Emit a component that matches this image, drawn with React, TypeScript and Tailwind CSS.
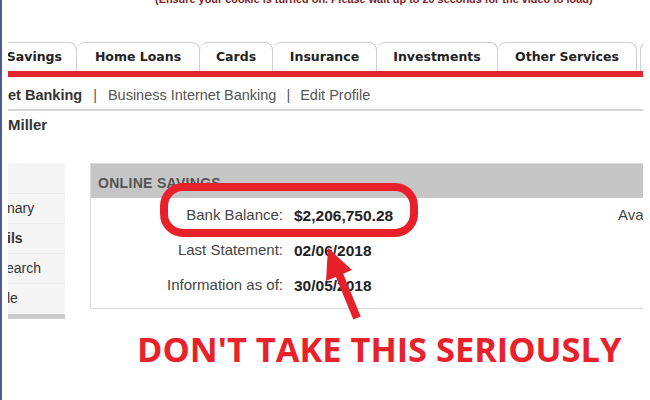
import React from "react";

const tabs = [
  { label: "Home Loans", w: "w-[123px]" },
  { label: "Cards", w: "w-[73px]" },
  { label: "Insurance", w: "w-[104px]" },
  { label: "Investments", w: "w-[121px]" },
  { label: "Other Services", w: "w-[139px]" },
];

const rows = [
  { label: "Bank Balance:", value: "$2,206,750.28", extra: "Available Balance:" },
  { label: "Last Statement:", value: "02/06/2018", extra: "" },
  { label: "Information as of:", value: "30/05/2018", extra: "" },
];

export default function App() {
  return (
    <div className="relative w-[650px] h-[400px] flex bg-white overflow-hidden">
      <div className="w-[2px] h-full bg-[#4d5b8c] shrink-0" />
      <div className="ml-[6px] w-[635px] h-full overflow-hidden flex flex-col shrink-0">
        {/* clipped top notice */}
        <div className="h-[6px] overflow-hidden">
          <div className="mt-[-7px] pl-[147px] whitespace-nowrap text-[10.9px] leading-[12px] font-bold text-[#7a1c1c] font-['Liberation_Sans',sans-serif]">
            (Ensure your cookie is turned on. Please wait up to 20 seconds for the video to load)
          </div>
        </div>

        {/* tabs */}
        <div className="mt-[36px] h-[29px] flex items-end font-['DejaVu_Sans',sans-serif] text-[12.5px] font-bold text-[#222]">
          <div className="w-[69px] h-[29px] shrink-0 flex items-center justify-end pr-[14px] border-t border-r border-[#cfcfcf] rounded-tr-[8px] whitespace-nowrap">
            Savings
          </div>
          {tabs.map((t) => (
            <div
              key={t.label}
              className={`${t.w} h-[29px] shrink-0 flex items-center justify-center border-t border-r border-[#cfcfcf] rounded-t-[8px] whitespace-nowrap`}
            >
              {t.label}
            </div>
          ))}
          <div className="ml-[3px] w-[40px] h-[29px] shrink-0 border-t border-l border-[#cfcfcf] rounded-tl-[8px]" />
        </div>
        <div className="h-[6px] bg-[#e3262c]" />

        {/* sub nav */}
        <div className="h-[34px] pt-[10px] border-b-2 border-[#d6d6d6] flex items-start font-['Liberation_Sans',sans-serif] text-[14.5px] leading-[16px] text-[#555] whitespace-nowrap">
          <span className="font-bold text-[#333]">et Banking</span>
          <span className="mx-[11px]">|</span>
          <span>Business Internet Banking</span>
          <span className="mx-[10px]">|</span>
          <span>Edit Profile</span>
        </div>

        <div className="mt-[6px] font-['Liberation_Sans',sans-serif] text-[15px] leading-[16px] font-bold text-[#333]">
          Miller
        </div>

        {/* main row */}
        <div className="mt-[30px] flex items-start font-['Liberation_Sans',sans-serif] text-[14px]">
          <div className="w-[57px] shrink-0 bg-[#f5f5f5] flex flex-col text-[#333]">
            <div className="h-[30px]" />
            <div className="h-[30px] border-t border-[#ebebeb] flex items-center -ml-[1px] whitespace-nowrap">nary</div>
            <div className="h-[30px] border-t border-[#ebebeb] flex items-center font-bold -ml-[1px] whitespace-nowrap">ils</div>
            <div className="h-[30px] border-t border-[#ebebeb] flex items-center -ml-[2px] whitespace-nowrap">earch</div>
            <div className="h-[30px] border-t border-[#ebebeb] flex items-center -ml-[1px] whitespace-nowrap">le</div>
            <div className="h-[1px] bg-white" />
            <div className="h-[5px] bg-[#cbcbcb]" />
          </div>

          <div className="ml-[25px] w-[570px] shrink-0 border border-[#dcdcdc]">
            <div className="h-[34px] bg-[#c6c6c6] flex items-center pt-[4px] pl-[7px] text-[14px] tracking-[0.3px] font-bold text-[#555]">
              ONLINE SAVINGS
            </div>
            <div className="pb-[5px]">
              {rows.map((r) => (
                <div key={r.label} className="h-[35px] flex items-center whitespace-nowrap">
                  <div className="w-[192px] shrink-0 text-right text-[15px] text-[#444]">{r.label}</div>
                  <div className="w-[335px] shrink-0 pl-[11px] text-[15.5px] font-bold text-[#222]">{r.value}</div>
                  <div className="shrink-0 text-[15px] text-[#444]">{r.extra}</div>
                </div>
              ))}
            </div>
          </div>
        </div>

        <div className="mt-[10px] pl-[129px] whitespace-nowrap font-['Open_Sans',sans-serif] font-bold text-[34.4px] leading-[40px] text-[#e8212b]">
          DON'T TAKE THIS SERIOUSLY
        </div>
      </div>

      <svg className="absolute left-0 top-0 pointer-events-none" width="650" height="400" viewBox="0 0 650 400">
        <rect x="164" y="187" width="250" height="46" rx="19" fill="none" stroke="#e8202a" strokeWidth="8" />
        <line x1="357" y1="318" x2="339" y2="274" stroke="#e8202a" strokeWidth="8" />
        <polygon points="328,248 352,270 326,281" fill="#e8202a" />
      </svg>
    </div>
  );
}
